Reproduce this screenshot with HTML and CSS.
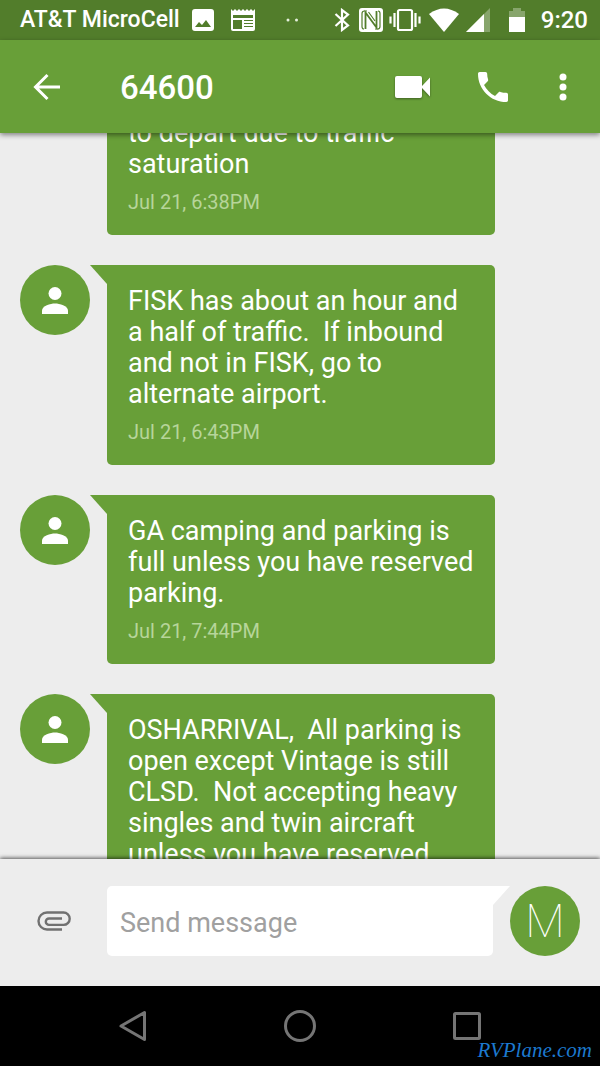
FILE: index.html
```html
<!DOCTYPE html>
<html lang="en">
<head>
<meta charset="utf-8">
<meta name="viewport" content="width=device-width, initial-scale=1">
<title>64600</title>
<link rel="stylesheet" href="styles.css">
</head>
<body>
<svg class="defs" width="0" height="0" aria-hidden="true">
  <symbol id="person" viewBox="0 0 26 27">
    <circle cx="13" cy="6.5" r="6.5"/>
    <path d="M0 27v-3.500c0-4.500 8.500-7 13-7s13 2.500 13 7V27z"/>
  </symbol>
</svg>
<div class="status">
  <span class="carrier">AT&amp;T MicroCell</span>
  <svg class="ic-image" width="22" height="22" viewBox="0 0 22 22"><path fill="#fff" fill-rule="evenodd" d="M3 0h16q3 0 3 3v16q0 3-3 3H3q-3 0-3-3V3q0-3 3-3zM3 18h16l-5-7-4 5-3-3z"/></svg>
  <svg class="ic-news" width="24" height="22" viewBox="0 0 24 22"><path fill="#fff" fill-rule="evenodd" d="M0 0l2 2 2-2 2 2 2-2 2 2 2-2 2 2 2-2 2 2 2-2 2 2 2-2v20q0 2-2 2H2q-2 0-2-2zM2 6v3h20V6zM2 11v9h9v-9zM13 11v1h9v-1zM13 14v1h9v-1zM13 17v1h9v-1z"/></svg>
  <svg class="ic-more" width="13" height="4" viewBox="0 0 13 4" fill="#e6efdd"><circle cx="2" cy="2" r="1.500"/><circle cx="10.500" cy="2" r="1.500"/></svg>
  <div class="system">
    <svg width="16" height="24" viewBox="0 0 16 24" fill="none" stroke="#fff" stroke-width="2.200"><path d="M1.500 6l12.500 11.500L8 22V2L14 6.500 1.500 18"/></svg>
    <svg class="ic-nfc" width="24" height="24" viewBox="0 0 24 24"><rect width="24" height="24" rx="3" fill="#fff"/><path d="M6.500 21V4.500L17.500 19.500V3" fill="none" stroke="#527d2b" stroke-width="1.800"/><path d="M8 3H5.500Q3 3 3 5.500v13Q3 21 5 21M16 21h2.500q2.500 0 2.500-2.500v-13Q21 3 19 3M9.500 4L16 13" fill="none" stroke="#527d2b" stroke-width="1.200"/></svg>
    <svg class="ic-vibrate" width="32" height="24" viewBox="0 0 32 24" fill="none" stroke="#fff" stroke-width="2.200"><rect x="9" y="2" width="14" height="20" rx="1.500"/><path d="M5.500 5v14M1.500 8.500v7M26.500 5v14M30.500 8.500v7"/></svg>
    <svg class="ic-wifi" width="30" height="24" viewBox="0 0 30 24"><path fill="#fff" d="M0 6Q15-5 30 6L15 24z"/></svg>
    <svg class="ic-signal" width="24" height="24" viewBox="0 0 24 24"><path fill="#87a56c" d="M24 0v24H0z"/><path fill="#fff" d="M18 6v18H0z"/></svg>
    <svg class="ic-battery" width="16" height="24" viewBox="0 0 16 24"><path fill="#87a56c" d="M4 0h8v3h4v7H0V3h4z"/><path fill="#fff" d="M0 9h16v15H0z"/></svg>
    <time>9:20</time>
  </div>
</div>
<header class="appbar">
  <button class="back" aria-label="Back"><svg width="28" height="28" viewBox="0 0 28 28" fill="none" stroke="#fff" stroke-width="3"><path d="M28 14H3M15.500 2L3.500 14l12 12"/></svg></button>
  <h1>64600</h1>
  <button class="video" aria-label="Video call"><svg width="36" height="24" viewBox="0 0 36 24" fill="#fff"><path d="M2 1h23q2 0 2 2v8l8-8.500v19L27 13v8q0 2-2 2H2q-2 0-2-2V3q0-2 2-2z"/></svg></button>
  <button class="phone" aria-label="Call"><svg width="30" height="30" viewBox="3 3 18 18" fill="#fff"><path d="M6.620 10.790c1.440 2.830 3.760 5.140 6.590 6.590l2.200-2.200c.27-.27.67-.36 1.020-.24 1.120.37 2.330.57 3.570.57.550 0 1 .45 1 1V20c0 .55-.45 1-1 1-9.390 0-17-7.610-17-17 0-.55.45-1 1-1h3.500c.55 0 1 .45 1 1 0 1.250.2 2.450.57 3.570.11.35.030.74-.25 1.020l-2.200 2.200z"/></svg></button>
  <button class="menu" aria-label="More options"><svg width="8" height="28" viewBox="0 0 8 28" fill="#fff"><circle cx="4" cy="4" r="3.500"/><circle cx="4" cy="14" r="3.500"/><circle cx="4" cy="24" r="3.500"/></svg></button>
</header>
<main class="thread">
  <article class="message scrolled">
    <div class="bubble"><p>to depart due to traffic saturation</p><time>Jul 21, 6:38PM</time></div>
  </article>
  <article class="message">
    <div class="avatar"><svg width="26" height="27"><use href="#person"/></svg></div>
    <div class="bubble tail"><p>FISK has about an hour and a half of traffic.  If inbound and not in FISK, go to alternate airport.</p><time>Jul 21, 6:43PM</time></div>
  </article>
  <article class="message">
    <div class="avatar"><svg width="26" height="27"><use href="#person"/></svg></div>
    <div class="bubble tail"><p>GA camping and parking is full unless you have reserved parking.</p><time>Jul 21, 7:44PM</time></div>
  </article>
  <article class="message">
    <div class="avatar"><svg width="26" height="27"><use href="#person"/></svg></div>
    <div class="bubble tail"><p>OSHARRIVAL,  All parking is open except Vintage is still CLSD.  Not accepting heavy singles and twin aircraft unless you have reserved</p></div>
  </article>
</main>
<form class="composer">
  <button type="button" class="attach" aria-label="Attach"><svg width="34" height="20" viewBox="0 0 34 20" fill="none" stroke="#717171" stroke-width="2.400"><path d="M25 18.500H10a8.500 8.500 0 0 1 0-17H26.500a6.200 6.200 0 0 1 0 12.400H12a3.200 3.200 0 0 1 0-6.400h13"/></svg></button>
  <div class="field"><input type="text" aria-label="Send message" placeholder="Send message"></div>
  <button type="button" class="avatar self" aria-label="Send">M</button>
</form>
<nav class="navbar">
  <button aria-label="Back"><svg width="28" height="32" viewBox="0 0 28 32"><path d="M2 16L25.500 2.500v27z"/></svg></button>
  <button aria-label="Home"><svg width="32" height="32" viewBox="0 0 32 32"><circle cx="16" cy="16" r="14.500"/></svg></button>
  <button aria-label="Recent apps"><svg width="28" height="28" viewBox="0 0 28 28"><rect x="1.500" y="1.500" width="25" height="25" rx="1"/></svg></button>
  <span class="watermark">RVPlane.com</span>
</nav>
</body>
</html>
```
FILE: styles.css
```css
* { box-sizing: border-box; }
body {
  margin: 0;
  height: 100vh;
  display: flex;
  flex-direction: column;
  overflow: hidden;
  background: #ededed;
  color: #fff;
  font-family: Roboto, "Noto Sans", sans-serif;
}
.defs { position: absolute; }
svg { display: block; flex: none; }
h1, p { margin: 0; }
button {
  display: flex;
  align-items: center;
  justify-content: center;
  flex: none;
  padding: 0;
  border: 0;
  background: none;
  color: inherit;
  font-family: inherit;
}
.status {
  flex: none;
  display: flex;
  align-items: center;
  height: 40px;
  padding: 0 13px 0 20px;
  background: #527d2b;
  font-size: 24px;
  font-weight: 500;
  line-height: 42px;
}
.carrier { font-size: 23px; }
.ic-image { margin-left: 12px; }
.ic-news { margin-left: 17px; }
.ic-more { margin-left: 31px; }
.system {
  display: flex;
  align-items: center;
  margin-left: auto;
}
.ic-nfc { margin-left: 9px; }
.ic-vibrate { margin-left: 6px; }
.ic-wifi { margin-left: 8px; }
.ic-signal { margin-left: 7px; }
.ic-battery { margin-left: 19px; margin-right: 16px; }
.system { margin-right: -1px; }
.appbar {
  position: relative;
  z-index: 1;
  flex: none;
  display: flex;
  align-items: center;
  height: 93px;
  padding: 0 33px 0 32px;
  background: #689f38;
  box-shadow: 0 2px 5px rgba(0, 0, 0, 0.45);
}
.appbar h1 {
  flex: 1;
  margin-left: 60px;
  padding-top: 2px;
  font-size: 33px;
  font-weight: 500;
  line-height: 40px;
}
.video svg { filter: drop-shadow(0 1px 1px rgba(0, 0, 0, 0.4)); }
.phone { margin-left: 47px; }
.menu { margin-left: 51px; }
.thread {
  flex: 1;
  min-height: 0;
  display: flex;
  flex-direction: column;
  gap: 30px;
  overflow: hidden;
  padding: 0 105px 0 20px;
}
.message {
  flex: none;
  display: flex;
  align-items: flex-start;
  gap: 17px;
}
.scrolled { margin-top: -36px; padding-left: 87px; }
.avatar {
  flex: none;
  display: flex;
  align-items: center;
  justify-content: center;
  width: 70px;
  height: 70px;
  border-radius: 50%;
  background: #689f38;
  fill: #fff;
}
.bubble {
  position: relative;
  flex: 1;
  padding: 21px 20px 20px 21px;
  border-radius: 5px;
  background: #689f38;
}
.tail { border-top-left-radius: 0; }
.tail::before {
  content: "";
  position: absolute;
  top: 0;
  right: 100%;
  width: 17px;
  height: 19px;
  background: #689f38;
  clip-path: polygon(0 0, 100% 0, 100% 100%);
}
.bubble p {
  font-size: 27px;
  line-height: 31px;
  white-space: pre-wrap;
}
.bubble time {
  display: block;
  margin-top: 10px;
  color: #b7d59a;
  font-size: 20px;
  line-height: 25px;
}
.composer {
  position: relative;
  flex: none;
  display: flex;
  align-items: center;
  height: 127px;
  padding: 0 20px 3px;
  background: #ededed;
  box-shadow: 0 -1px 4px rgba(0, 0, 0, 0.65);
}
.attach { width: 67px; }
.field {
  position: relative;
  flex: 1;
  margin: 0 17px 0 20px;
}
.field::after {
  content: "";
  position: absolute;
  top: 0;
  left: 100%;
  width: 17px;
  height: 19px;
  background: #fff;
  clip-path: polygon(0 0, 100% 0, 0 100%);
}
.field input {
  display: block;
  width: 100%;
  height: 70px;
  padding: 4px 13px 0;
  border: 0;
  border-radius: 5px 0 5px 5px;
  background: #fff;
  color: #333;
  font-family: inherit;
  font-size: 27px;
}
.field input::placeholder { color: #a0a0a0; opacity: 1; }
.self {
  font-size: 46px;
  font-weight: 100;
}
.navbar {
  position: relative;
  flex: none;
  display: flex;
  align-items: center;
  justify-content: center;
  gap: 137px;
  height: 80px;
  background: #000;
}
.navbar svg {
  fill: none;
  stroke: #757575;
  stroke-width: 3;
  stroke-linejoin: round;
}
.watermark {
  position: absolute;
  right: 8px;
  bottom: 4px;
  color: #1c79cf;
  font-family: "Liberation Serif", serif;
  font-size: 21px;
  font-style: italic;
  line-height: 24px;
}
```
